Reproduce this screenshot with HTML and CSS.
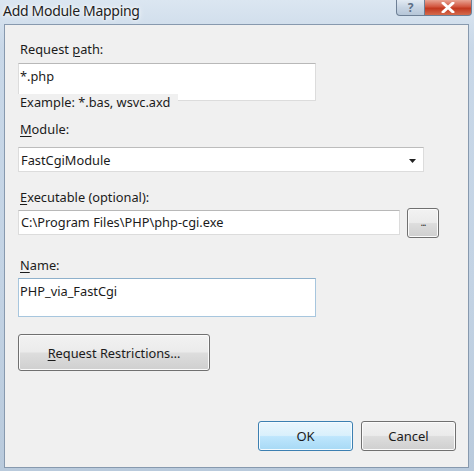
FILE: index.html
```html
<!DOCTYPE html>
<html>
<head>
<meta charset="utf-8">
<link rel="stylesheet" href="styles.css">
</head>
<body>
<div class="window">
  <div class="titlebar">
    <div class="title">Add Module Mapping</div>
    <div class="caption-buttons">
      <div class="cap-btn help">?</div>
      <div class="cap-btn close">
        <svg width="14" height="11" viewBox="0 0 14 11"><path d="M2 1 L12 10 M12 1 L2 10" stroke="#fff" stroke-width="3" stroke-linecap="round"/></svg>
      </div>
    </div>
  </div>
  <div class="client">
    <div class="label l1">Request <u>p</u>ath:</div>
    <div class="textbox tb-path">*.php</div>
    <div class="example">Example: *.bas, wsvc.axd</div>
    <div class="label l2"><u>M</u>odule:</div>
    <div class="combo">
      <span>FastCgiModule</span>
      <svg class="arrow" width="7" height="4" viewBox="0 0 7 4"><path d="M0 0 H7 L3.5 4 Z" fill="#222"/></svg>
    </div>
    <div class="label l3"><u>E</u>xecutable (optional):</div>
    <div class="exec-row">
      <div class="textbox tb-exec">C:\Program Files\PHP\php-cgi.exe</div>
      <div class="btn browse">...</div>
    </div>
    <div class="label l4"><u>N</u>ame:</div>
    <div class="textbox tb-name">PHP_via_FastCgi</div>
    <div class="btn restrict"><span><u>R</u>equest Restrictions…</span></div>
    <div class="footer">
      <div class="btn ok">OK</div>
      <div class="btn cancel">Cancel</div>
    </div>
  </div>
</div>
</body>
</html>
```
FILE: styles.css
```css
html, body {
  margin: 0;
  padding: 0;
}
body {
  width: 474px;
  height: 471px;
  overflow: hidden;
  font-family: "Noto Sans", "Open Sans", sans-serif;
  font-size: 12.8px;
  color: #1b1b1b;
}
.window {
  width: 474px;
  height: 471px;
  box-sizing: border-box;
  background: linear-gradient(180deg, #dbe6f1 0%, #c9d8e8 10%, #c3d3e4 60%, #b9cadc 100%);
  display: flex;
  flex-direction: column;
  padding: 0 4px 3px 4px;
}
.titlebar {
  height: 24px;
  display: flex;
  justify-content: space-between;
  align-items: flex-start;
  flex: none;
}
.title {
  font-size: 14px;
  letter-spacing: -0.3px;
  line-height: 18px;
  margin-top: 2px;
  margin-left: -1px;
  color: #1e1e1e;
  text-shadow: 0 0 6px #fff, 0 0 3px #fff;
}
.caption-buttons {
  display: flex;
  margin-right: -2px;
}
.cap-btn {
  height: 15px;
  border: 1px solid #6d7f95;
  border-top: none;
  display: flex;
  align-items: center;
  justify-content: center;
  box-sizing: content-box;
}
.help {
  width: 27px;
  border-radius: 0 0 0 4px;
  background: linear-gradient(180deg, #e2eaf3 0%, #c7d4e3 50%, #b6c6d8 100%);
  color: #5d6f86;
  font-weight: bold;
  font-size: 12px;
  line-height: 15px;
}
.close {
  width: 46px;
  border-left: none;
  border-radius: 0 0 4px 0;
  background: linear-gradient(180deg, #e8a393 0%, #d2553e 45%, #c2381f 55%, #d46a4c 100%);
}
.client {
  flex: 1;
  background: #f0f0f0;
  border: 1px solid #8799ae;
  margin-right: 1px;
  display: flex;
  flex-direction: column;
  padding: 0 0 0 13px;
}
.label {
  height: 16px;
  line-height: 16px;
  padding-left: 2px;
}
.label u, .btn u {
  text-decoration-thickness: 1px;
  text-underline-offset: 2px;
}
.l1 { margin-top: 16px; }
.textbox {
  background: #fff;
  border: 1px solid #dcdcdc;
  border-top-color: #b8b8b8;
  box-sizing: border-box;
  padding: 4px 0 0 2px;
  line-height: 16px;
}
.tb-path {
  width: 298px;
  height: 38px;
  margin-top: 6px;
  padding-left: 1px;
}
.example {
  align-self: flex-start;
  background: #f0f0f0;
  margin-top: -7px;
  height: 17px;
  line-height: 17px;
  padding: 0 8px 0 2px;
  position: relative;
}
.l2 { margin-top: 10px; }
.combo {
  width: 406px;
  height: 25px;
  margin-top: 10px;
  background: #fff;
  border: 1px solid #dcdcdc;
  border-top-color: #bcbcbc;
  box-sizing: border-box;
  display: flex;
  align-items: center;
  justify-content: space-between;
  padding: 0 7px 0 2px;
}
.combo .arrow { margin-top: 2px; }
.l3 { margin-top: 17px; }
.exec-row {
  display: flex;
  align-items: flex-start;
  margin-top: 5px;
  gap: 7px;
}
.tb-exec {
  width: 382px;
  height: 25px;
  padding-top: 3px;
}
.btn {
  box-sizing: border-box;
  border: 1px solid #707070;
  border-radius: 3px;
  background: linear-gradient(180deg, #f2f2f2 0%, #ebebeb 48%, #dddddd 52%, #cfcfcf 100%);
  box-shadow: inset 0 0 0 1px #fbfbfb;
  display: flex;
  align-items: center;
  justify-content: center;
  color: #1b1b1b;
}
.browse {
  width: 32px;
  height: 30px;
  margin-top: -2px;
  font-size: 10px;
  letter-spacing: -1px;
  color: #333;
  padding-bottom: 2px;
}
.l4 { margin-top: 19px; }
.tb-name {
  width: 298px;
  height: 39px;
  margin-top: 5px;
  border: 1px solid #a7c6de;
  border-top-color: #8eb0cb;
  padding-left: 1px;
}
.restrict {
  width: 192px;
  height: 37px;
  margin-top: 17px;
  font-size: 12.8px;
}
.footer {
  display: flex;
  justify-content: flex-end;
  gap: 8px;
  margin-top: auto;
  margin-bottom: 16px;
  padding-right: 12px;
}
.ok, .cancel {
  width: 95px;
  height: 30px;
  font-size: 13px;
}
.ok {
  border-color: #3c7fb1;
  background: linear-gradient(180deg, #eaf6fd 0%, #d9f0fc 48%, #bee6fd 52%, #a7d9f5 100%);
  box-shadow: inset 0 0 0 1px #f4fbff;
}
```
